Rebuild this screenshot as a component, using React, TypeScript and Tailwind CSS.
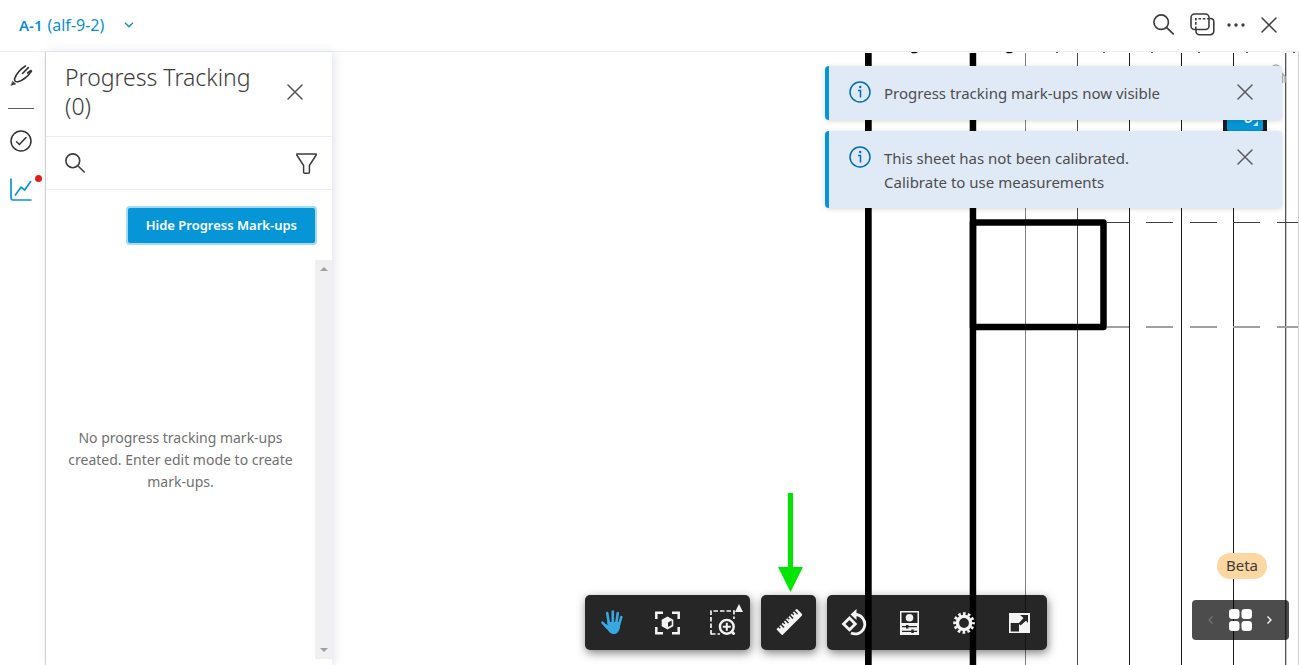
import type { ReactNode } from "react";

function CloseIcon({ className }: { className: string }) {
  return (
    <svg viewBox="0 0 16 16" className={className} fill="none" stroke="currentColor" strokeWidth="1.5" strokeLinecap="round" aria-hidden="true">
      <path d="M1 1 15 15M15 1 1 15" />
    </svg>
  );
}

function SearchIcon({ className }: { className: string }) {
  return (
    <svg viewBox="0 0 20 20" className={className} fill="none" stroke="currentColor" strokeWidth="1.6" strokeLinecap="round" aria-hidden="true">
      <circle cx="7.8" cy="7.8" r="6.9" />
      <path d="M12.8 12.8 19.2 19" />
    </svg>
  );
}

function Header() {
  return (
    <header className="flex h-[52px] shrink-0 items-center justify-between border-b border-[#eeeeee] bg-white pr-[22px] pb-[2px] pl-[19px] text-[#3c3c3c]">
      <button type="button" className="flex items-center text-[16px] leading-6 text-[#0a8fd0]">
        <span className="text-[15px] font-semibold">A-1</span>
        <span className="ml-[5px]">(alf-9-2)</span>
        <svg viewBox="0 0 10 6" className="ml-5 h-[6px] w-[10px]" fill="none" stroke="currentColor" strokeWidth="1.3" aria-hidden="true">
          <path d="M1 .8 5 4.8 9 .8" />
        </svg>
      </button>
      <div className="flex items-center gap-3">
        <button type="button" aria-label="Search" className="mr-1">
          <SearchIcon className="size-[21px]" />
        </button>
        <button type="button" aria-label="Compare sheets">
          <svg viewBox="0 0 25 23" className="h-[23px] w-[25px]" fill="none" stroke="currentColor" strokeWidth="1.6" aria-hidden="true">
            <rect x="1" y="1" width="18" height="15.5" rx="3.5" />
            <path d="M19.5 5.5h1a3.3 3.3 0 0 1 3.3 3.3v9.4a3.5 3.5 0 0 1-3.5 3.5H9.5a3.5 3.5 0 0 1-3.5-3.5v-1.5" />
            <path d="M5.8 16V5.8H19" strokeDasharray="2.6 1.7" />
          </svg>
        </button>
        <button type="button" aria-label="More options">
          <svg viewBox="0 0 18 4" className="h-1 w-[18px]" fill="currentColor" aria-hidden="true">
            <circle cx="2" cy="2" r="1.7" />
            <circle cx="9" cy="2" r="1.7" />
            <circle cx="16" cy="2" r="1.7" />
          </svg>
        </button>
        <button type="button" aria-label="Close sheet" className="ml-1">
          <CloseIcon className="size-4" />
        </button>
      </div>
    </header>
  );
}

function Rail() {
  return (
    <nav aria-label="Tools" className="flex w-[46px] shrink-0 flex-col items-center border-r border-[#d6d6d6] pt-[13px] pr-1 text-[#333333]">
      <button type="button" aria-label="Mark-ups">
        <svg viewBox="0 0 24 22" className="h-[22px] w-6" fill="none" stroke="currentColor" strokeWidth="1.6" strokeLinecap="round" strokeLinejoin="round" aria-hidden="true">
          <path d="M16.500 1C12 3.500 7 9 5.700 13.500 5.200 16 6.500 17.200 9 16.700 13.500 15.500 19 11 22.400 6.200" />
          <path d="M19.300 2.600 13.500 8.500M21.800 5.500 18.500 8" />
          <path d="M3.800 16.500 6.700 19 2.300 20.300Z" fill="currentColor" strokeWidth=".6" />
        </svg>
      </button>
      <hr className="mt-[21px] w-[26px] border-[#5c5c5c]" />
      <button type="button" aria-label="Issues" className="mt-[21px]">
        <svg viewBox="0 0 22 22" className="size-[22px]" fill="none" stroke="currentColor" strokeWidth="1.5" strokeLinecap="round" aria-hidden="true">
          <circle cx="11" cy="11" r="10" />
          <path d="m6.500 11.800 2.900 2.700 6.600-7" />
        </svg>
      </button>
      <button type="button" aria-label="Progress tracking" className="relative mt-[26px] text-[#0696d7]">
        <svg viewBox="0 0 22 23" className="h-[23px] w-[22px]" fill="none" stroke="currentColor" strokeWidth="1.7" aria-hidden="true">
          <path d="M1 .5V19.500Q1 22 3.500 22H21.500" />
          <path d="M5 17.500 11 9.300 14.700 12 21 3" />
        </svg>
        <span className="absolute -top-[3px] -right-[10px] size-[7px] rounded-full bg-[#df2020]" />
      </button>
    </nav>
  );
}

function ProgressPanel() {
  return (
    <aside className="z-10 flex w-[286px] shrink-0 flex-col bg-white pb-[6px] shadow-[2px_0_10px_rgba(60,80,130,0.16)]">
      <div className="flex items-center justify-between border-b border-[#ececec] pt-[11px] pr-[29px] pb-[15px] pl-[19px]">
        <h1 className="w-[200px] text-[23px] leading-[29px] font-light text-[#3c3c3c]">Progress Tracking (0)</h1>
        <button type="button" aria-label="Close panel" className="text-[#555555]">
          <CloseIcon className="size-4" />
        </button>
      </div>
      <div className="flex h-[53px] shrink-0 items-center justify-between border-b border-[#ececec] pr-[15px] pl-[19px] text-[#3c3c3c]">
        <button type="button" aria-label="Search mark-ups">
          <SearchIcon className="size-5" />
        </button>
        <button type="button" aria-label="Filter">
          <svg viewBox="0 0 21 21" className="size-[21px]" fill="none" stroke="currentColor" strokeWidth="1.5" strokeLinejoin="round" aria-hidden="true">
            <path d="M.8 1H20.200V2L13.400 12.500V19.200Q13.400 20.200 12.400 20.200H8.600Q7.600 20.200 7.600 19.200V12.500L.8 2Z" />
          </svg>
        </button>
      </div>
      <div className="flex justify-end px-[17px] pt-[18px] pb-[17px]">
        <button type="button" className="h-[35px] rounded-xs bg-[#0696d7] px-[18px] text-[13px] font-semibold text-white shadow-[0_0_0_2px_#a5dbf2]">
          Hide Progress Mark-ups
        </button>
      </div>
      <div className="flex min-h-0 flex-1">
        <p className="flex-1 self-center px-4 text-center text-[14px] leading-[22px] text-[#707070]">
          No progress tracking mark-ups created. Enter edit mode to create mark-ups.
        </p>
        <div className="flex w-[17px] shrink-0 flex-col items-center justify-between bg-[#f0f0f0] py-[7px] text-[#a0a0a0]">
          <svg viewBox="0 0 8 4" className="h-1 w-2" fill="currentColor" aria-hidden="true">
            <path d="M4 0 8 4H0Z" />
          </svg>
          <svg viewBox="0 0 8 4" className="h-1 w-2" fill="currentColor" aria-hidden="true">
            <path d="M0 0H8L4 4Z" />
          </svg>
        </div>
      </div>
    </aside>
  );
}

const dashes = [[1107, 1129], [1146, 1173], [1190, 1217], [1233, 1260], [1277, 1299]];

const gridLines = [
  { x: 1025, color: "#808080" },
  { x: 1077, color: "#4a4a4a" },
  { x: 1129, color: "#1c1c1c" },
  { x: 1181, color: "#161616" },
  { x: 1233, color: "#1c1c1c" },
  { x: 1285, color: "#555555" },
];

function SheetDrawing() {
  return (
    <svg viewBox="332 52 967 613" preserveAspectRatio="xMaxYMin slice" className="absolute inset-0 size-full" aria-hidden="true">
      {gridLines.map((line) => (
        <rect key={line.x} x={line.x} y="53" width="1" height="612" fill={line.color} />
      ))}
      <rect x="1286" y="53" width="1" height="612" fill="#c8c8c8" />
      <rect x="865" y="53" width="6.700" height="612" />
      <rect x="969.700" y="53" width="6.500" height="612" />
      <rect x="973" y="222.500" width="130.500" height="104.500" fill="none" stroke="#000" strokeWidth="6.500" strokeLinejoin="round" />
      {dashes.map(([from, to]) => (
        <g key={from}>
          <rect x={from} y="222" width={to - from} height="1" fill="#404040" />
          <rect x={from} y="326" width={to - from} height="2" fill="#a0a0a0" />
        </g>
      ))}
      <path d="M911 52h7l-2 1.200h-4zM1006 52h7l-2 1.200h-4z" />
      <path d="M1056 52h2v1h-2zM1103 52h2v1h-2zM1151 52h2v1h-2zM1198 52h2v1h-2zM1246 52h2v1h-2zM1293 52h2v1h-2z" fill="#555" />
      <path d="M1272 67q4-4 8 0M1282.500 74v9M1281 72l4 4.500v6" fill="none" stroke="#b5b5b5" strokeWidth="1.600" />
      <rect x="1223" y="100" width="44" height="31" fill="#1c1c1c" />
      <rect x="1227" y="100" width="36" height="31" rx="2" fill="#0696d7" />
      <path d="M1245 119q1 4 4 3t3-4" fill="none" stroke="#fff" strokeWidth="1.800" />
      <path d="M1258 121v5h-5z" fill="#cfe6f2" />
      <rect x="1298" y="52" width="1" height="613" fill="#d0d0d0" />
    </svg>
  );
}

function Toast({ children }: { children: ReactNode }) {
  return (
    <div role="status" className="flex min-h-[54px] items-start rounded-[4px] border-l-4 border-[#0696d7] bg-[#e0eaf7] pt-[15px] pr-[29px] pb-[14px] pl-5 shadow-[0_1px_5px_rgba(0,0,0,0.16)]">
      <svg viewBox="0 0 22 22" className="size-[22px] shrink-0" fill="none" stroke="#006eaf" strokeWidth="1.500" aria-hidden="true">
        <circle cx="11" cy="11" r="10" />
        <path d="M9 9.500H11.500V16.500" />
        <circle cx="11.200" cy="6" r="1.200" fill="#006eaf" stroke="none" />
      </svg>
      <p className="ml-[13px] w-[300px] text-[15px] leading-6 text-[#4d4d4d]">{children}</p>
      <button type="button" aria-label="Dismiss" className="mt-[3px] ml-auto text-[#5c5c5c]">
        <CloseIcon className="size-4" />
      </button>
    </div>
  );
}

function ToolButton({ label, children }: { label: string; children: ReactNode }) {
  return (
    <button type="button" aria-label={label} className="relative grid size-[55px] place-items-center">
      {children}
    </button>
  );
}

const groupClass = "flex rounded-[5px] bg-black/85 text-[#f4f4f4] shadow-[1px_3px_10px_rgba(0,0,0,0.5)]";

function Toolbar() {
  return (
    <div role="toolbar" aria-label="Viewer tools" className="absolute inset-x-0 bottom-[15px] flex justify-center gap-[11px]">
      <div className={groupClass}>
        <ToolButton label="Pan">
          <svg viewBox="0 0 22 25" className="h-[25px] w-[22px] text-[#37a9e0]" fill="none" stroke="currentColor" strokeWidth="2.600" strokeLinecap="round" aria-hidden="true">
            <path d="M8 14 6.200 3M11.800 13V1.500M15.300 13 16.800 3M18 15 20.300 7M6.500 18 1.500 12.600" />
            <path d="M7 12.500H18.800L18.300 18Q17.500 23.700 12.500 23.700 8.500 23.700 6 18L3.500 14.300Q5.500 14.300 7.500 16Z" fill="currentColor" strokeWidth="1" />
          </svg>
        </ToolButton>
        <ToolButton label="Fit to view">
          <svg viewBox="0 0 25 24" className="h-6 w-[25px]" fill="none" stroke="currentColor" strokeWidth="2.500" aria-hidden="true">
            <path d="M1.300 8V1.700H8M17 1.700h6.700V8M23.700 16v6.300H17M8 22.300H1.300V16" />
            <path d="M12.500 5.500 18.300 8.800V15.200L12.500 18.500 6.700 15.200V8.800Z" fill="currentColor" stroke="none" />
            <path d="M13 11.500 16.700 9.500V14L13 16Z" fill="#262626" stroke="none" />
          </svg>
        </ToolButton>
        <ToolButton label="Zoom window">
          <svg viewBox="0 0 25 25" className="size-[25px]" fill="none" stroke="currentColor" aria-hidden="true">
            <path d="M1 24.500V1H24V9" strokeWidth="1.700" strokeDasharray="4.500 2" />
            <path d="M1 24H10" strokeWidth="1.700" strokeDasharray="4.500 2" />
            <circle cx="16.800" cy="16.800" r="6.900" strokeWidth="2.400" />
            <path d="M16.800 12.800v8M12.800 16.800h8" strokeWidth="2" />
            <path d="m21.200 21.200 3.300 3.300" strokeWidth="2.800" />
          </svg>
          <svg viewBox="0 0 8 8" className="absolute top-[9px] right-[7px] size-2" fill="currentColor" aria-hidden="true">
            <path d="M4 0 8 8H0Z" />
          </svg>
        </ToolButton>
      </div>
      <div className={groupClass}>
        <div className="relative">
          <ToolButton label="Measure">
            <svg viewBox="0 0 27 27" className="size-[27px]" aria-hidden="true">
              <g transform="translate(1 -.5) rotate(-45 13.500 13.500)">
                <rect x="-1" y="9.300" width="29" height="8.400" rx=".8" fill="currentColor" />
                <path d="M2.500 9v2.500M5.700 9v4.500M8.900 9v2.500M12.100 9v4.500M15.300 9v2.500M18.500 9v4.500M21.700 9v2.500M24.900 9v4.500" stroke="#262626" strokeWidth="1.400" />
              </g>
            </svg>
          </ToolButton>
          <svg viewBox="0 0 25 99" className="pointer-events-none absolute bottom-full left-[17px] mb-[3px] h-[99px] w-[25px]" fill="#00e600" aria-hidden="true">
            <path d="M10 0H15V74H25L12.500 99 0 74H10Z" />
          </svg>
        </div>
      </div>
      <div className={groupClass}>
        <ToolButton label="Rotate sheet">
          <svg viewBox="0 0 27 27" className="size-[27px]" fill="none" stroke="currentColor" aria-hidden="true">
            <path d="M8.500 9 14.300 15 8.500 20.800 2.500 15Z" strokeWidth="2.800" />
            <path d="M14 5.500A9.700 9.700 0 1 1 10 24" strokeWidth="2.800" />
            <path d="M15.500 0V11L9.500 5.500Z" fill="currentColor" stroke="none" />
          </svg>
        </ToolButton>
        <ToolButton label="Properties">
          <svg viewBox="0 0 19 24" className="h-6 w-[19px]" aria-hidden="true">
            <rect width="19" height="24" fill="currentColor" />
            <rect x="1.500" y="1.500" width="16" height="10.500" fill="#262626" />
            <circle cx="9.500" cy="6.700" r="3.800" fill="currentColor" />
            <path d="M2 15.700H17M2 20.300H17" stroke="#262626" strokeWidth="1.200" />
            <path d="M7.200 14v3.400M12.500 18.600V22" stroke="#262626" strokeWidth="2.400" />
          </svg>
        </ToolButton>
        <ToolButton label="Settings">
          <svg viewBox="0 0 22 22" className="size-[22px]" fill="none" stroke="currentColor" aria-hidden="true">
            <circle cx="11" cy="11" r="6.600" strokeWidth="3.400" />
            <circle cx="11" cy="11" r="9.300" strokeWidth="3" strokeDasharray="2.700 2.170" strokeDashoffset="1.350" />
          </svg>
        </ToolButton>
        <ToolButton label="Full screen">
          <svg viewBox="0 0 21 20" className="h-5 w-[21px]" aria-hidden="true">
            <rect width="21" height="20" fill="currentColor" />
            <rect x="1.700" y="10" width="8.300" height="8.500" fill="#262626" />
            <path d="M11 2H19V10L17 7.800 11.500 12.500 9.500 10.500 14.500 5Z" fill="#262626" />
          </svg>
        </ToolButton>
      </div>
    </div>
  );
}

function SheetNavigator() {
  return (
    <div className="absolute right-[10px] bottom-[25px] flex flex-col items-end">
      <span className="mr-[22px] mb-[21px] flex h-[26px] items-center rounded-full bg-[#fcd7a1] px-[9px] pb-px text-[15px] text-[#3c3c3c]">Beta</span>
      <div className="flex h-10 w-[97px] items-center justify-between rounded-[4px] bg-black/70 pr-[17px] pl-4 text-white">
        <button type="button" aria-label="Previous sheet" className="text-[#777777]">
          <svg viewBox="0 0 5 8" className="h-2 w-[5px]" fill="none" stroke="currentColor" strokeWidth="1.200" aria-hidden="true">
            <path d="M4.500.5 1 4 4.500 7.500" />
          </svg>
        </button>
        <button type="button" aria-label="All sheets">
          <svg viewBox="0 0 23 22" className="h-[22px] w-[23px]" fill="currentColor" aria-hidden="true">
            <rect width="10.500" height="10" rx="3.300" />
            <rect x="12.500" width="10.500" height="10" rx="3.300" />
            <rect y="12" width="10.500" height="10" rx="3.300" />
            <rect x="12.500" y="12" width="10.500" height="10" rx="3.300" />
          </svg>
        </button>
        <button type="button" aria-label="Next sheet">
          <svg viewBox="0 0 5 8" className="h-2 w-[5px]" fill="none" stroke="currentColor" strokeWidth="1.300" aria-hidden="true">
            <path d="M.5.5 4 4 .5 7.500" />
          </svg>
        </button>
      </div>
    </div>
  );
}

export default function App() {
  return (
    <div className="flex h-screen flex-col overflow-hidden bg-white font-['Noto_Sans',sans-serif]">
      <Header />
      <div className="flex min-h-0 flex-1">
        <Rail />
        <ProgressPanel />
        <main className="relative min-w-0 flex-1 overflow-hidden">
          <SheetDrawing />
          <div className="absolute top-[14px] right-[17px] flex w-[457px] flex-col gap-[11px]">
            <Toast>Progress tracking mark-ups now visible</Toast>
            <Toast>This sheet has not been calibrated. Calibrate to use measurements</Toast>
          </div>
          <Toolbar />
          <SheetNavigator />
        </main>
      </div>
    </div>
  );
}
